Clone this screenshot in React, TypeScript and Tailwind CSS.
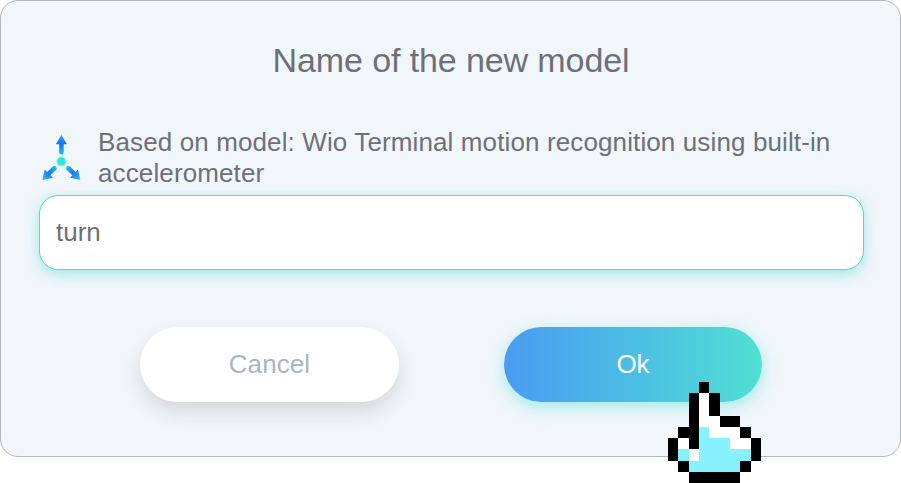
const CURSOR_ROWS = [
  '...K.....',
  '..KWK....',
  '..KWK....',
  '..KWWKK..',
  '.KKCWWWK.',
  'KWKCCCWWK',
  'KCWCCCCCK',
  '.KCCCCCK.',
  '..KKKKK..',
];

const CURSOR_COLORS: Record<string, string> = { K: '#000000', W: '#ffffff', C: '#86f1ff' };

function PixelCursor() {
  return (
    <svg
      className="absolute left-[668px] top-[382px] h-[101px] w-[93px]"
      viewBox="0 0 9 9"
      preserveAspectRatio="none"
      shapeRendering="crispEdges"
    >
      {CURSOR_ROWS.flatMap((row, y) =>
        row.split('').map((c, x) =>
          c === '.' ? null : (
            <rect key={`${x}-${y}`} x={x} y={y} width="1" height="1" fill={CURSOR_COLORS[c]} />
          ),
        ),
      )}
    </svg>
  );
}

function AxesIcon() {
  return (
    <svg className="h-[50px] w-[44px] shrink-0" viewBox="0 0 44 50">
      <defs>
        <linearGradient id="up" gradientUnits="userSpaceOnUse" x1="0" y1="3" x2="0" y2="23">
          <stop offset="0" stopColor="#24a5ff" />
          <stop offset="0.45" stopColor="#1b70ff" />
          <stop offset="1" stopColor="#10d2e2" />
        </linearGradient>
        <linearGradient id="left" gradientUnits="userSpaceOnUse" x1="3" y1="48" x2="18" y2="34">
          <stop offset="0" stopColor="#2bc4ff" />
          <stop offset="0.5" stopColor="#1b78ff" />
          <stop offset="1" stopColor="#10cfe0" />
        </linearGradient>
        <linearGradient id="right" gradientUnits="userSpaceOnUse" x1="41" y1="48" x2="26" y2="34">
          <stop offset="0" stopColor="#2bc4ff" />
          <stop offset="0.5" stopColor="#1b78ff" />
          <stop offset="1" stopColor="#10cfe0" />
        </linearGradient>
      </defs>
      <path
        d="M22.4 3 L28 12.2 H24.7 V20.3 Q24.7 22.5 22.4 22.5 Q20.1 22.5 20.1 20.3 V12.2 H16.8Z"
        fill="url(#up)"
      />
      <path
        d="M3.4 48 L5.8 37.6 L8.2 40 L13.8 34.6 Q15.6 33.2 17.1 34.7 Q18.6 36.4 17 38 L11.4 43.3 L13.8 45.7Z"
        fill="url(#left)"
      />
      <path
        d="M41.4 48 L39 37.6 L36.6 40 L31 34.6 Q29.2 33.2 27.7 34.7 Q26.2 36.4 27.8 38 L33.4 43.3 L31 45.7Z"
        fill="url(#right)"
      />
      <circle cx="22.4" cy="29.4" r="5.4" fill="#2ce6dc" fillOpacity="0.3" />
      <circle cx="22.4" cy="29.4" r="4" fill="#2ce6dc" />
    </svg>
  );
}

export default function App() {
  return (
    <div className="relative h-[483px] w-[901px] overflow-hidden bg-white font-['Liberation_Sans',Arial,sans-serif] text-[#6e7079]">
      <div className="flex h-[457px] flex-col rounded-[18px] border border-[#b4b7ba] bg-[#f1f6fb] px-[38px]">
        <h1 className="mt-[39px] pl-px text-center text-[34px] leading-[40px] tracking-[-0.1px]">
          Name of the new model
        </h1>
        <div className="mt-[47px] flex h-[62px]">
          <div className="mt-[5px] h-[50px] w-[59px]">
            <AxesIcon />
          </div>
          <p className="whitespace-nowrap text-[26px] leading-[31px] tracking-[0.12px]">
            Based on model: Wio Terminal motion recognition using built-in
            <br />
            accelerometer
          </p>
        </div>
        <input
          className="mt-[6px] h-[75px] w-[825px] shrink-0 rounded-[19px] border border-[#50dad3] bg-white px-[16px] text-[26px] shadow-[0_4px_14px_rgba(80,218,211,0.5)] outline-none"
          defaultValue="turn"
        />
        <div className="mt-[57px] flex gap-[105px] pl-[101px] text-[26px]">
          <button className="h-[75px] w-[259px] rounded-full bg-white text-[#a8b5c5] shadow-[0_10px_20px_rgba(0,0,0,0.12)] tracking-[0.1px]">
            Cancel
          </button>
          <button className="h-[75px] w-[258px] rounded-full bg-linear-to-r from-[#4a9bf1] to-[#51dfd3] text-white shadow-[0_5px_16px_rgba(80,223,211,0.5)]">
            Ok
          </button>
        </div>
      </div>
      <PixelCursor />
    </div>
  );
}
